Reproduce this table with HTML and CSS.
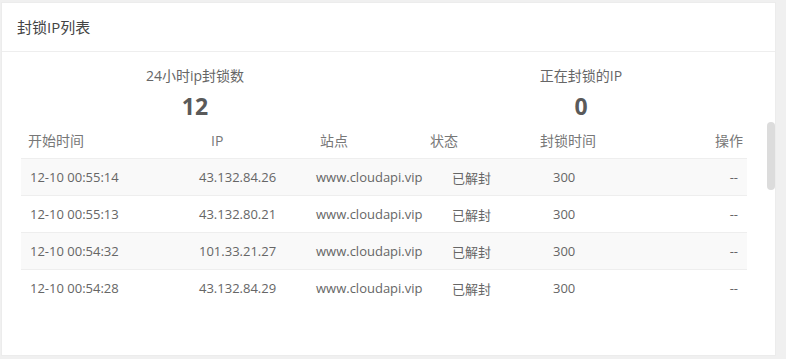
FILE: index.html
```html
<!DOCTYPE html>
<html lang="zh">
<head>
<meta charset="utf-8">
<link rel="stylesheet" href="styles.css">
</head>
<body>
<div class="card">
  <div class="card-head">封锁IP列表</div>
  <div class="card-body">
    <div class="stats">
      <div class="stat">
        <div class="stat-label">24小时ip封锁数</div>
        <div class="stat-num">12</div>
      </div>
      <div class="stat">
        <div class="stat-label">正在封锁的IP</div>
        <div class="stat-num">0</div>
      </div>
    </div>
    <div class="table">
      <div class="row head">
        <div class="c c1">开始时间</div>
        <div class="c c2">IP</div>
        <div class="c c3">站点</div>
        <div class="c c4">状态</div>
        <div class="c c5">封锁时间</div>
        <div class="c c6">操作</div>
      </div>
      <div class="row data odd">
        <div class="c c1">12-10 00:55:14</div>
        <div class="c c2">43.132.84.26</div>
        <div class="c c3">www.cloudapi.vip</div>
        <div class="c c4">已解封</div>
        <div class="c c5">300</div>
        <div class="c c6">--</div>
      </div>
      <div class="row data">
        <div class="c c1">12-10 00:55:13</div>
        <div class="c c2">43.132.80.21</div>
        <div class="c c3">www.cloudapi.vip</div>
        <div class="c c4">已解封</div>
        <div class="c c5">300</div>
        <div class="c c6">--</div>
      </div>
      <div class="row data odd">
        <div class="c c1">12-10 00:54:32</div>
        <div class="c c2">101.33.21.27</div>
        <div class="c c3">www.cloudapi.vip</div>
        <div class="c c4">已解封</div>
        <div class="c c5">300</div>
        <div class="c c6">--</div>
      </div>
      <div class="row data">
        <div class="c c1">12-10 00:54:28</div>
        <div class="c c2">43.132.84.29</div>
        <div class="c c3">www.cloudapi.vip</div>
        <div class="c c4">已解封</div>
        <div class="c c5">300</div>
        <div class="c c6">--</div>
      </div>
    </div>
  </div>
  <div class="scroll-thumb"></div>
</div>
</body>
</html>
```

FILE: styles.css
```css
* { box-sizing: border-box; }
html, body {
  margin: 0;
  background: #f0f0f0;
}
body {
  padding: 2px 10px 0 1px;
  font-family: "Open Sans", "Noto Sans CJK SC", sans-serif;
  font-size: 13px;
  color: #666;
}
.card {
  position: relative;
  width: 775px;
  height: 354px;
  background: #fff;
  border: 1px solid #ececec;
}
.card-head {
  height: 49px;
  line-height: 48px;
  padding-left: 15px;
  font-size: 15px;
  color: #444;
  border-bottom: 1px solid #eee;
}
.card-body {
  padding: 15px 0 0 19px;
}
.stats {
  display: flex;
  margin-left: -19px;
  width: 772px;
}
.stat {
  flex: 1;
  text-align: center;
}
.stat-label {
  line-height: 18px;
  font-size: 14px;
  color: #666;
}
.stat-num {
  margin-top: 8px;
  line-height: 26px;
  font-size: 23px;
  font-weight: 700;
  color: #5a5a5a;
}
.table {
  margin-top: 3px;
  width: 726px;
}
.row {
  display: grid;
  grid-template-columns: 170px 120px 115px 110px 105px 106px;
  align-items: center;
}
.row.head {
  height: 36px;
  font-size: 14px;
  color: #777;
}
.row.data {
  height: 37px;
  border-top: 1px solid #eee;
  color: #666;
}
.row.odd { background: #f9f9f9; }
.c { white-space: nowrap; }
.head .c1 { padding-left: 7px; }
.head .c2 { padding-left: 20px; }
.head .c3 { padding-left: 9px; }
.head .c4 { padding-left: 4px; }
.head .c5 { padding-left: 4px; }
.head .c6 { text-align: right; padding-right: 4px; }
.data .c1 { padding-left: 9px; }
.data .c2 { padding-left: 8px; }
.data .c3 { padding-left: 5px; }
.data .c4 { padding-left: 26px; }
.data .c5 { padding-left: 17px; }
.data .c6 { text-align: right; padding-right: 9px; }
.scroll-thumb {
  position: absolute;
  left: 765px;
  top: 119px;
  width: 8px;
  height: 68px;
  border-radius: 4px;
  background: #dcdcdc;
}
```
